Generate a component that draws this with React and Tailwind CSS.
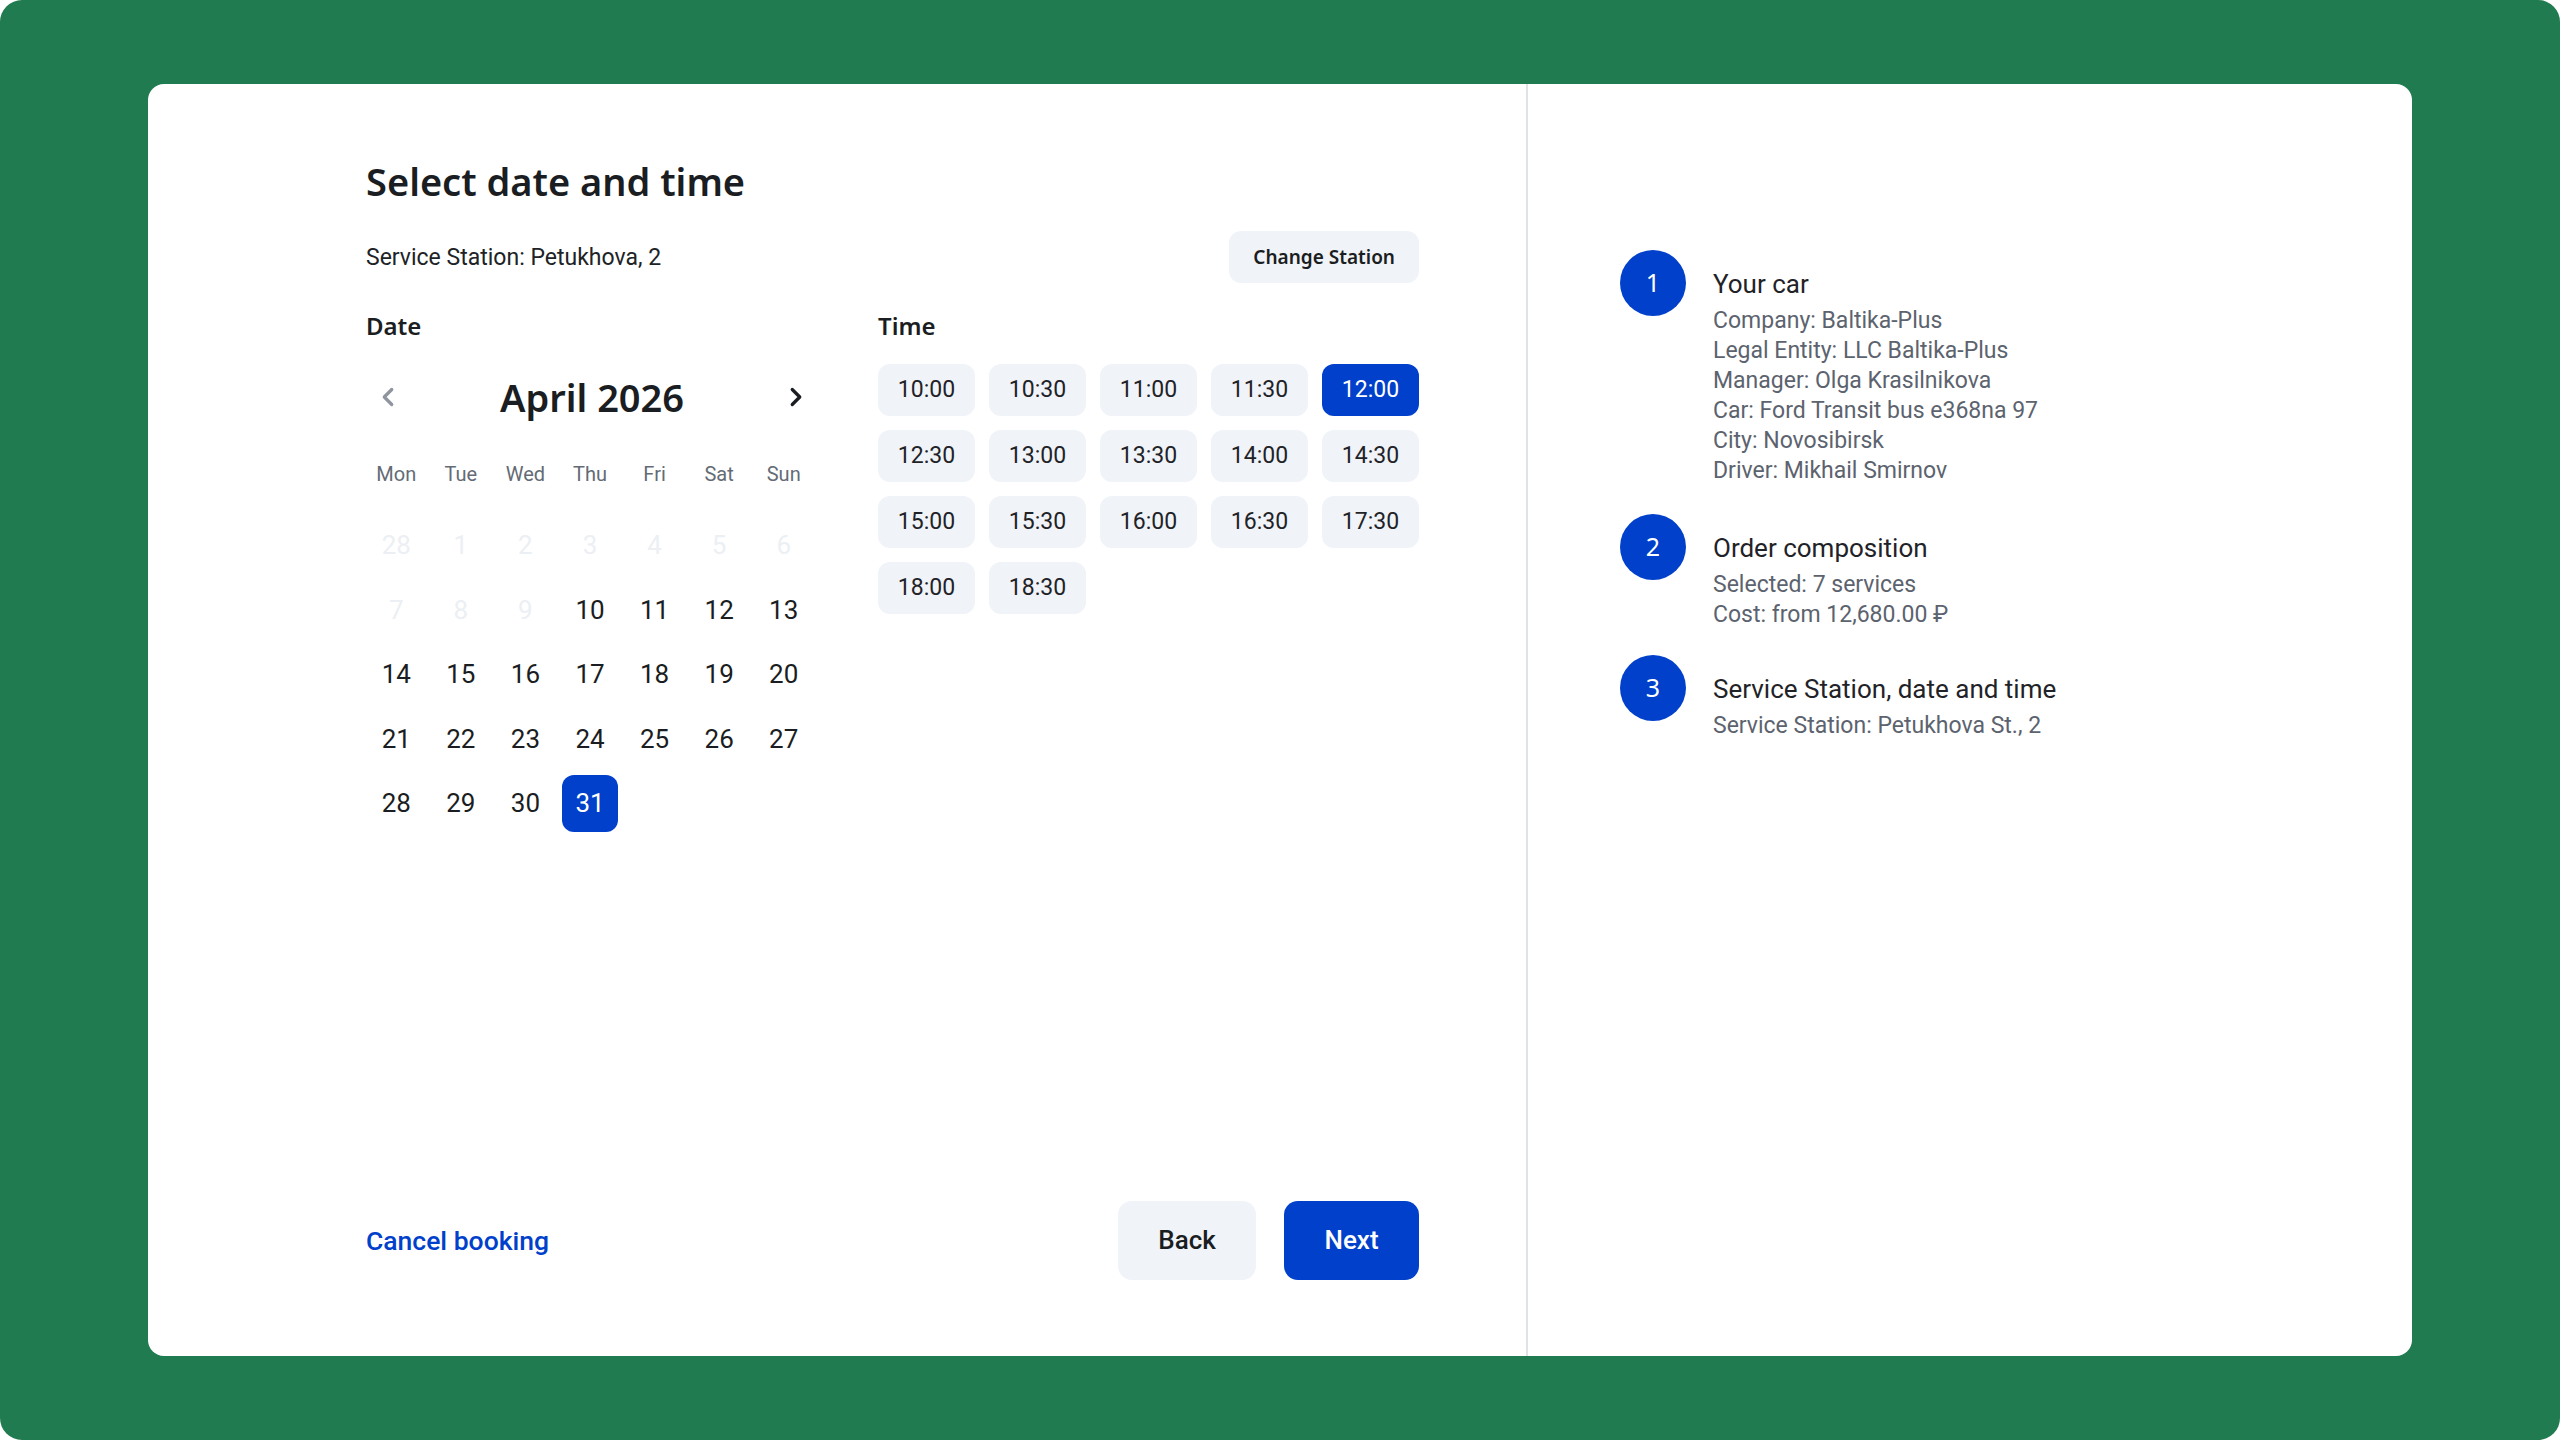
import React from 'react';
import { ChevronLeft, ChevronRight } from 'lucide-react';

const WEEKDAYS = ['Mon', 'Tue', 'Wed', 'Thu', 'Fri', 'Sat', 'Sun'];

// first row starts on Mon 28 of the previous month
const DAYS = [28, 1, 2, 3, 4, 5, 6, 7, 8, 9, ...Array.from({ length: 22 }, (_, i) => i + 10)];
const DISABLED_UNTIL = 10; // first 10 cells are greyed out
const SELECTED_DAY = 31;

const SLOTS = [
  '10:00', '10:30', '11:00', '11:30', '12:00',
  '12:30', '13:00', '13:30', '14:00', '14:30',
  '15:00', '15:30', '16:00', '16:30', '17:30',
  '18:00', '18:30',
];
const SELECTED_SLOT = '12:00';

const STEPS = [
  {
    n: 1,
    title: 'Your car',
    lines: [
      'Company: Baltika-Plus',
      'Legal Entity: LLC Baltika-Plus',
      'Manager: Olga Krasilnikova',
      'Car: Ford Transit bus e368na 97',
      'City: Novosibirsk',
      'Driver: Mikhail Smirnov',
    ],
    gap: 'mt-0',
  },
  {
    n: 2,
    title: 'Order composition',
    lines: ['Selected: 7 services', 'Cost: from 12,680.00 ₽'],
    gap: 'mt-[28px]',
  },
  {
    n: 3,
    title: 'Service Station, date and time',
    lines: ['Service Station: Petukhova St., 2'],
    gap: 'mt-[25px]',
  },
];

const Calendar = () => (
  <div className="w-[452px]">
    <h2 className="font-['Noto_Sans',sans-serif] text-[24px] leading-[32px] font-semibold text-[#1a1d21]">Date</h2>

    <div className="mt-[32px] flex items-center justify-between h-[46px]">
      <button className="w-[44px] h-[44px] flex items-center justify-center text-[#8f959e]">
        <ChevronLeft size={30} strokeWidth={2.6} />
      </button>
      <span className="font-['Noto_Sans',sans-serif] text-[38px] leading-[46px] font-semibold text-[#1a1d21]">
        April 2026
      </span>
      <button className="w-[44px] h-[44px] flex items-center justify-center text-[#1a1d21]">
        <ChevronRight size={30} strokeWidth={2.6} />
      </button>
    </div>

    <div className="mt-[40px] ml-[2px] w-[444px] grid grid-cols-7 gap-x-[8px]">
      {WEEKDAYS.map((d) => (
        <div key={d} className="h-[28px] text-center text-[20px] leading-[28px] text-[#646b75]">
          {d}
        </div>
      ))}
    </div>

    <div className="mt-[29px] ml-[2px] w-[444px] grid grid-cols-7 gap-x-[8px] gap-y-[7.5px]">
      {DAYS.map((d, i) => {
        const disabled = i < DISABLED_UNTIL;
        const selected = !disabled && d === SELECTED_DAY;
        return (
          <div
            key={i}
            className={
              'h-[57px] flex items-center justify-center rounded-[12px] text-[26px] ' +
              (selected
                ? 'bg-[#0040cb] text-white'
                : disabled
                  ? 'text-[#eceff3]'
                  : 'text-[#1a1d21]')
            }
          >
            {d}
          </div>
        );
      })}
    </div>
  </div>
);

const TimeSlots = () => (
  <div className="w-[541px]">
    <h2 className="font-['Noto_Sans',sans-serif] text-[24px] leading-[32px] font-semibold text-[#1a1d21]">Time</h2>
    <div className="mt-[22px] grid grid-cols-5 gap-[14px]">
      {SLOTS.map((t) => (
        <button
          key={t}
          className={
            'h-[52px] rounded-[12px] text-[23px] ' +
            (t === SELECTED_SLOT ? 'bg-[#0040cb] text-white' : 'bg-[#f0f3f8] text-[#1f2328]')
          }
        >
          {t}
        </button>
      ))}
    </div>
  </div>
);

const Summary = () => (
  <aside className="flex-1 pl-[92px] pt-[166px]">
    {STEPS.map((s) => (
      <div key={s.n} className={'flex items-start ' + s.gap}>
        <div className="w-[66px] h-[66px] shrink-0 rounded-full bg-[#0040cb] flex items-center justify-center font-['Noto_Sans',sans-serif] text-[25px] text-white">
          {s.n}
        </div>
        <div className="ml-[27px] pt-[18px]">
          <h3 className="text-[26px] leading-[32px] text-[#1f2328]">{s.title}</h3>
          <div className="mt-[6px]">
            {s.lines.map((l) => (
              <p key={l} className="text-[23px] leading-[30px] text-[#5c636e]">
                {l}
              </p>
            ))}
          </div>
        </div>
      </div>
    ))}
  </aside>
);

export default function App() {
  return (
    <div className="min-h-screen bg-white font-['Roboto',sans-serif]">
      <div className="h-screen w-full bg-[#207b50] rounded-[22px] px-[148px] py-[84px] flex">
        <div className="flex flex-1 bg-white rounded-2xl overflow-hidden">
          <section className="w-[1378px] shrink-0 flex flex-col pl-[218px] pr-[107px] pt-[74px] pb-[76px]">
            <h1 className="font-['Noto_Sans',sans-serif] text-[38px] leading-[46px] font-semibold text-[#1a1d21]">
              Select date and time
            </h1>

            <div className="mt-[27px] h-[52px] flex items-center justify-between">
              <p className="text-[23px] leading-[27px] text-[#202326]">Service Station: Petukhova, 2</p>
              <button className="h-[52px] px-[24px] rounded-[12px] bg-[#f0f3f8] font-['Noto_Sans',sans-serif] text-[19px] font-semibold text-[#1a1d21]">
                Change Station
              </button>
            </div>

            <div className="mt-[27px] flex gap-[60px]">
              <Calendar />
              <TimeSlots />
            </div>

            <div className="mt-auto flex items-center justify-between">
              <button className="text-[26.5px] font-medium text-[#0040cb]">Cancel booking</button>
              <div className="flex gap-[28px]">
                <button className="h-[79px] w-[138px] rounded-[14px] bg-[#f0f3f8] text-[26px] font-medium text-[#1a1d21]">
                  Back
                </button>
                <button className="h-[79px] w-[135px] rounded-[14px] bg-[#0040cb] text-[26px] font-medium text-white">
                  Next
                </button>
              </div>
            </div>
          </section>

          <div className="w-[2px] shrink-0 bg-[#dfe2e6]" />

          <Summary />
        </div>
      </div>
    </div>
  );
}
